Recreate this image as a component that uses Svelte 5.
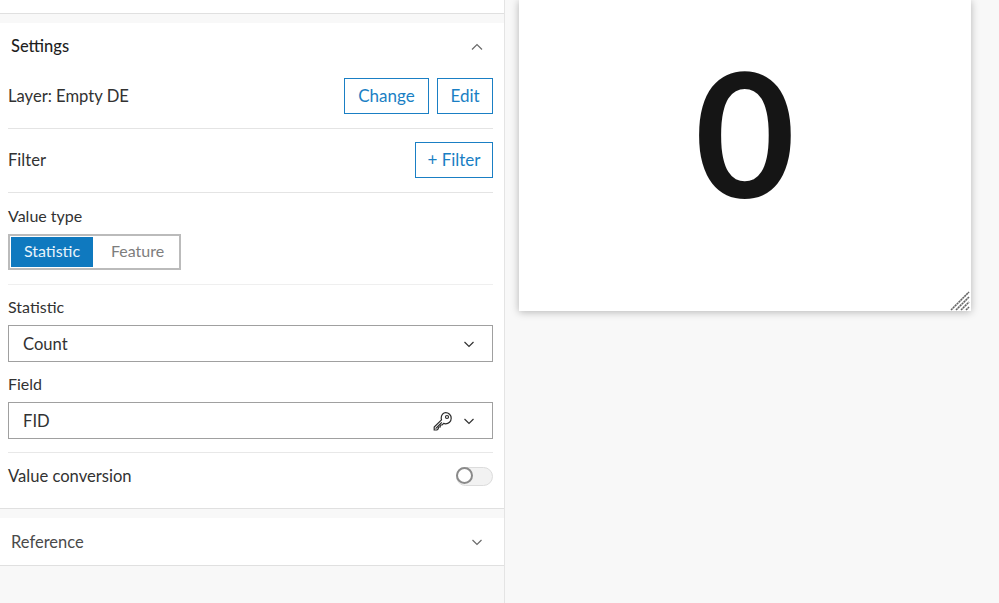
<script lang="ts">
  const chevronUp = 'M3 10.5 L8 5.5 L13 10.5';
  const chevronDown = 'M3.500 6 L8 10.500 L12.500 6';
</script>

<div class="page">
  <aside class="panel">
    <div class="top-stub"></div>

    <section class="block settings">
      <header class="block-head">
        <span class="title">Settings</span>
        <svg class="chev muted" viewBox="0 0 16 16"><path d={chevronUp} /></svg>
      </header>

      <div class="body">
        <div class="row layer-row">
          <span>Layer: Empty DE</span>
          <div class="btns">
            <button class="btn change">Change</button>
            <button class="btn edit">Edit</button>
          </div>
        </div>

        <div class="row filter-row">
          <span>Filter</span>
          <button class="btn add">+ Filter</button>
        </div>

        <div class="value-type">
          <div class="label">Value type</div>
          <div class="segment">
            <span class="seg on">Statistic</span>
            <span class="seg">Feature</span>
          </div>
        </div>

        <div class="fields">
          <div class="label">Statistic</div>
          <div class="select">
            <span>Count</span>
            <svg class="chev" viewBox="0 0 16 16"><path d={chevronDown} /></svg>
          </div>
          <div class="label second">Field</div>
          <div class="select">
            <span>FID</span>
            <div class="select-icons">
              <svg class="key" viewBox="0 0 20 20">
                <path d="M12.6 1.6a5.6 5.6 0 0 1 5.6 5.6c0 3.2-2.6 5.6-5.6 5.6-.7 0-1.4-.1-2-.4l-1.5 1.6H7.2v2H5.3v1.7L4 19H1.200v-2.900l7.300-7.300a5.500 5.500 0 0 1-.3-1.700c0-3 2.200-5.500 4.400-5.500z" />
                <circle cx="14" cy="6" r="1.500" />
                <path d="M2.600 17.600 8.800 11.400" />
              </svg>
              <svg class="chev" viewBox="0 0 16 16"><path d={chevronDown} /></svg>
            </div>
          </div>
        </div>

        <div class="row conversion-row">
          <span>Value conversion</span>
          <span class="toggle"><span class="knob"></span></span>
        </div>
      </div>
    </section>

    <section class="block reference">
      <header class="block-head ref-head">
        <span class="title ref-title">Reference</span>
        <svg class="chev muted" viewBox="0 0 16 16"><path d={chevronDown} /></svg>
      </header>
    </section>
  </aside>

  <main class="canvas">
    <div class="card">
      <span class="number">0</span>
      <svg class="grip" viewBox="0 0 20 20">
        <path d="M1 19 19 1M6 19 19 6M11 19 19 11M16 19 19 16" />
      </svg>
    </div>
  </main>
</div>

<style>
  :global(body) {
    margin: 0;
    background: #f8f8f8;
  }

  .page {
    display: flex;
    width: 999px;
    height: 603px;
    overflow: hidden;
    background: #f8f8f8;
    font-family: Lato, "Liberation Sans", sans-serif;
    font-size: 16px;
    color: #323232;
  }

  .panel {
    width: 504px;
    flex: none;
    border-right: 1px solid #e4e4e4;
    background: #f8f8f8;
  }

  .top-stub {
    height: 13px;
    background: #fff;
    border-bottom: 1px solid #e0e0e0;
    margin-bottom: 9px;
  }

  .block {
    background: #fff;
    border-bottom: 1px solid #e0e0e0;
  }

  .settings {
    height: 486px;
    margin-bottom: 9px;
    box-sizing: border-box;
  }

  .reference {
    height: 48px;
    box-sizing: border-box;
  }

  .block-head {
    display: flex;
    align-items: center;
    justify-content: space-between;
    height: 47px;
    padding: 0 19px 0 11px;
  }

  .title {
    margin-top: -2px;
    font-weight: 500;
    color: #1f1f1f;
    font-size: 16.5px;
  }

  .ref-head .title {
    margin-top: 0;
  }

  .ref-title {
    color: #4a4a4a;
    font-weight: 400;
  }

  .chev {
    width: 16px;
    height: 16px;
    fill: none;
    stroke: #323232;
    stroke-width: 1.2;
  }

  .chev.muted {
    stroke: #6a6a6a;
  }

  .body {
    padding: 8px 11px 0 8px;
  }

  .row {
    display: flex;
    align-items: center;
    justify-content: space-between;
    border-bottom: 1px solid #e4e4e4;
  }

  .row > span:first-child,
  .select > span {
    font-size: 16.6px;
  }

  .layer-row {
    padding-bottom: 14px;
  }

  .filter-row {
    padding: 13px 0 14px;
  }

  .btns {
    display: flex;
    gap: 8px;
  }

  .btn {
    height: 36px;
    box-sizing: border-box;
    border: 1px solid #1a7fc4;
    background: #fff;
    color: #1a7fc4;
    font: inherit;
    font-size: 17px;
    padding: 0 0 2px;
  }

  .change { width: 85px; }
  .edit { width: 56px; }
  .add { width: 78px; }

  .value-type {
    padding-bottom: 14px;
    border-bottom: 1px solid #efefef;
  }

  .label {
    line-height: 24px;
  }

  .value-type .label {
    padding-top: 11px;
    margin-bottom: 6px;
  }

  .segment {
    display: flex;
    width: 173px;
    height: 36px;
    box-sizing: border-box;
    padding: 1px;
    border: 2px solid #bbb;
  }

  .seg {
    display: flex;
    align-items: center;
    justify-content: center;
    width: 85px;
    padding: 0 0 3px 4px;
    box-sizing: border-box;
    color: #7d7d7d;
  }

  .seg.on {
    width: 82px;
    padding-left: 0;
    background: #0f79bf;
    color: #e8f3fa;
  }

  .fields {
    padding-bottom: 13px;
    border-bottom: 1px solid #e8e8e8;
  }

  .fields > .label:first-child {
    padding-top: 10px;
    margin-bottom: 6px;
  }

  .label.second {
    margin: 10px 0 6px;
  }

  .select {
    display: flex;
    align-items: center;
    justify-content: space-between;
    height: 37px;
    box-sizing: border-box;
    padding: 0 15px 0 14px;
    border: 1px solid #a0a0a0;
  }

  .select-icons {
    display: flex;
    align-items: center;
    gap: 8px;
  }

  .key {
    width: 20px;
    height: 20px;
    fill: none;
    stroke: #2b2b2b;
    stroke-width: 1.2;
  }

  .conversion-row {
    border-bottom: none;
    padding-top: 14px;
  }

  .conversion-row > span:first-child {
    margin-top: -2px;
  }

  .toggle {
    position: relative;
    display: block;
    width: 37px;
    height: 19px;
    box-sizing: border-box;
    border: 1px solid #dcdcdc;
    border-radius: 10px;
    background: #f2f2f2;
  }

  .knob {
    position: absolute;
    left: -1px;
    top: -1px;
    width: 17px;
    height: 17px;
    box-sizing: border-box;
    border: 2px solid #8a8a8a;
    border-radius: 50%;
    background: #fff;
  }

  .canvas {
    flex: 1;
    padding-left: 14px;
    min-width: 0;
  }

  .card {
    position: relative;
    display: flex;
    align-items: center;
    justify-content: center;
    width: 452px;
    height: 311px;
    background: #fff;
    box-shadow: 0 1px 8px rgba(0, 0, 0, 0.28);
  }

  .number {
    margin-bottom: 48px;
    font-family: Lato, "Liberation Sans", sans-serif;
    font-weight: 700;
    font-size: 173px;
    line-height: 1;
    color: #151515;
  }

  .grip {
    position: absolute;
    right: 1px;
    bottom: 0;
    width: 20px;
    height: 20px;
    fill: none;
    stroke: #666;
    stroke-width: 1.6;
    stroke-dasharray: 2.200 .5;
  }
</style>
